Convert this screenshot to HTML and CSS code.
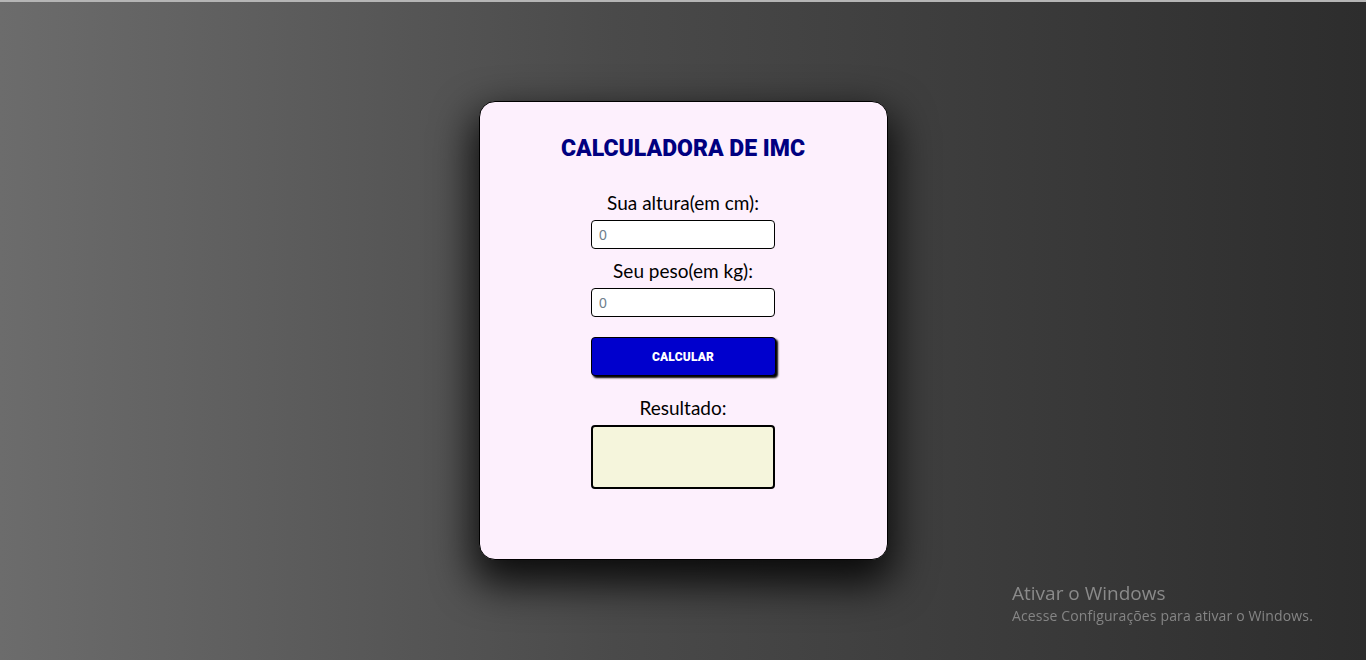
FILE: index.html
```html
<!DOCTYPE html>
<html lang="pt-BR">
<head>
<meta charset="utf-8">
<title>Calculadora de IMC</title>
<link rel="stylesheet" href="styles.css">
</head>
<body>
  <main class="page">
    <section class="card">
      <h1 class="title">CALCULADORA DE IMC</h1>
      <form class="form">
        <label class="label" for="altura">Sua altura(em cm):</label>
        <input class="field" id="altura" type="number" placeholder="0">
        <label class="label label-2" for="peso">Seu peso(em kg):</label>
        <input class="field" id="peso" type="number" placeholder="0">
        <button class="btn" type="button">CALCULAR</button>
        <span class="label label-result">Resultado:</span>
        <div class="result"></div>
      </form>
    </section>
  </main>
  <div class="watermark">
    <div class="wm-title">Ativar o Windows</div>
    <div class="wm-sub">Acesse Configurações para ativar o Windows.</div>
  </div>
</body>
</html>
```
FILE: styles.css
```css
html, body {
  margin: 0;
  padding: 0;
  height: 660px;
  overflow: hidden;
}
body {
  background: linear-gradient(to right, #6c6c6c 0%, #4a4a4a 45%, #2d2d2d 100%);
  border-top: 2px solid #b5b5b5;
  box-sizing: border-box;
  font-family: "Lato", "Open Sans", sans-serif;
}
.page {
  height: 658px;
  box-sizing: border-box;
  padding-bottom: 1px;
  display: flex;
  align-items: center;
  justify-content: center;
}
.card {
  width: 407px;
  height: 424px;
  background: #fdf0fd;
  border: 1px solid #000;
  border-radius: 16px;
  box-shadow: 0 18px 40px 6px rgba(0, 0, 0, 0.85);
  padding-top: 33px;
  display: flex;
  flex-direction: column;
  align-items: center;
}
.title {
  margin: 0;
  font-family: "Roboto", "Liberation Sans", sans-serif;
  font-weight: 900;
  font-size: 23px;
  line-height: 27px;
  color: #000080;
}
.form {
  display: flex;
  flex-direction: column;
  align-items: center;
  margin-top: 29px;
}
.label {
  display: block;
  font-size: 19px;
  line-height: 24px;
  color: #000;
}
.field {
  margin-top: 5px;
  width: 184px;
  height: 29px;
  box-sizing: border-box;
  border: 1px solid #000;
  border-radius: 4px;
  background: #fff;
  padding: 0 7px;
  font-family: "Liberation Sans", Arial, sans-serif;
  font-size: 14px;
  outline: none;
}
.field::placeholder {
  color: #6f7f8c;
}
.label-2 {
  margin-top: 10px;
}
.btn {
  margin-top: 20px;
  width: 185px;
  height: 39px;
  box-sizing: border-box;
  background: #0000cd;
  color: #fff;
  border: 1px solid #000;
  border-radius: 4px;
  box-shadow: 2px 2px 2px #000;
  font-family: "Roboto", "Liberation Sans", sans-serif;
  font-weight: 900;
  font-size: 12px;
  letter-spacing: 0.2px;
}
.label-result {
  margin-top: 20px;
}
.result {
  margin-top: 5px;
  width: 184px;
  height: 64px;
  box-sizing: border-box;
  border: 2px solid #000;
  border-radius: 4px;
  background: #f5f5dc;
}
.watermark {
  position: fixed;
  left: 1012px;
  top: 581px;
  color: #8a8a8a;
  font-family: "Open Sans", "Noto Sans", sans-serif;
}
.wm-title {
  font-size: 19px;
  line-height: 25px;
}
.wm-sub {
  font-size: 14px;
  line-height: 20px;
  letter-spacing: 0.15px;
  color: #858585;
}
```
